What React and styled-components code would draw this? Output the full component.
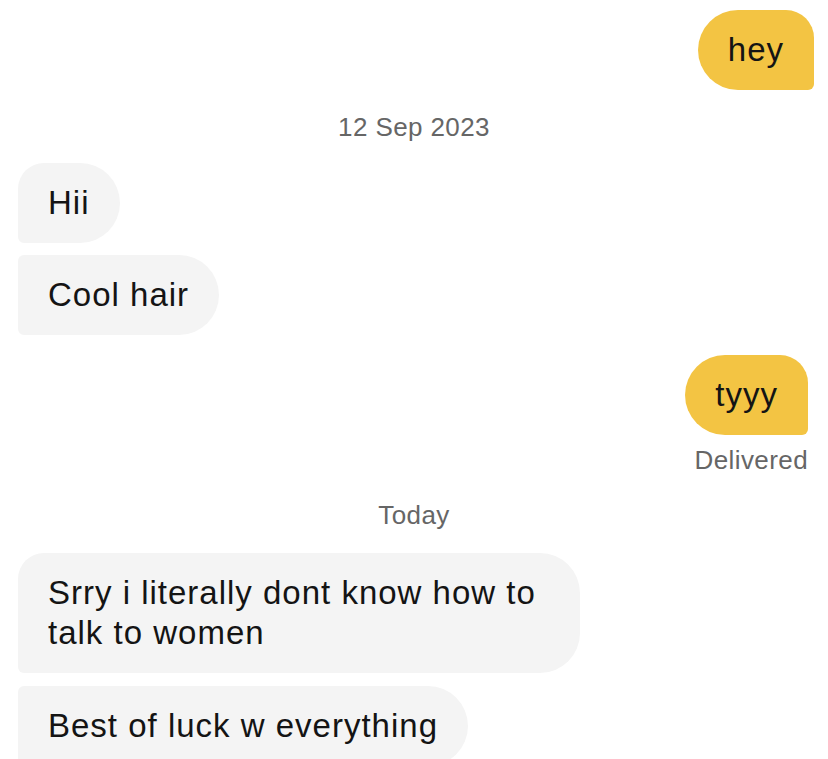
import React from 'react'
import styled, { createGlobalStyle } from 'styled-components'

const GlobalStyle = createGlobalStyle`
  body {
    margin: 0;
    background: #ffffff;
    font-family: 'Liberation Sans', Arial, sans-serif;
  }
`

const Thread = styled.div`
  display: flex;
  flex-direction: column;
  padding: 10px 14px 0 18px;
  height: 759px;
  box-sizing: border-box;
  overflow: hidden;
`

const Bubble = styled.div`
  box-sizing: border-box;
  max-width: 562px;
  padding: 20px 30px;
  font-size: 33px;
  line-height: 40px;
  letter-spacing: 1px;
  color: #141414;
  margin-top: ${(p) => p.$top || 0}px;
  margin-right: ${(p) => p.$inset || 0}px;
  align-self: ${(p) => (p.$mine ? 'flex-end' : 'flex-start')};
  background: ${(p) => (p.$mine ? '#f3c443' : '#f4f4f4')};
  border-radius: ${(p) =>
    p.$mine
      ? '40px 28px 6px 40px'
      : p.$first
      ? '26px 40px 40px 6px'
      : '6px 40px 40px 6px'};
`

const Stamp = styled.div`
  font-size: 26px;
  line-height: 30px;
  letter-spacing: 0.4px;
  color: #666666;
  margin-top: ${(p) => p.$top || 0}px;
  text-align: ${(p) => (p.$right ? 'right' : 'center')};
  padding-right: ${(p) => (p.$right ? '6px' : '0')};
  margin-left: ${(p) => (p.$right ? '0' : '-4px')};
`

function App() {
  return (
    <>
      <GlobalStyle />
      <Thread>
        <Bubble $mine>hey</Bubble>
        <Stamp $top={22}>12 Sep 2023</Stamp>
        <Bubble $first $top={21}>Hii</Bubble>
        <Bubble $top={12}>Cool hair</Bubble>
        <Bubble $mine $top={20} $inset={6}>
          tyyy
        </Bubble>
        <Stamp $right $top={10}>Delivered</Stamp>
        <Stamp $top={25}>Today</Stamp>
        <Bubble $first $top={23}>
          Srry i literally dont know how to talk to women
        </Bubble>
        <Bubble $top={13}>Best of luck w everything</Bubble>
      </Thread>
    </>
  )
}

export default App
